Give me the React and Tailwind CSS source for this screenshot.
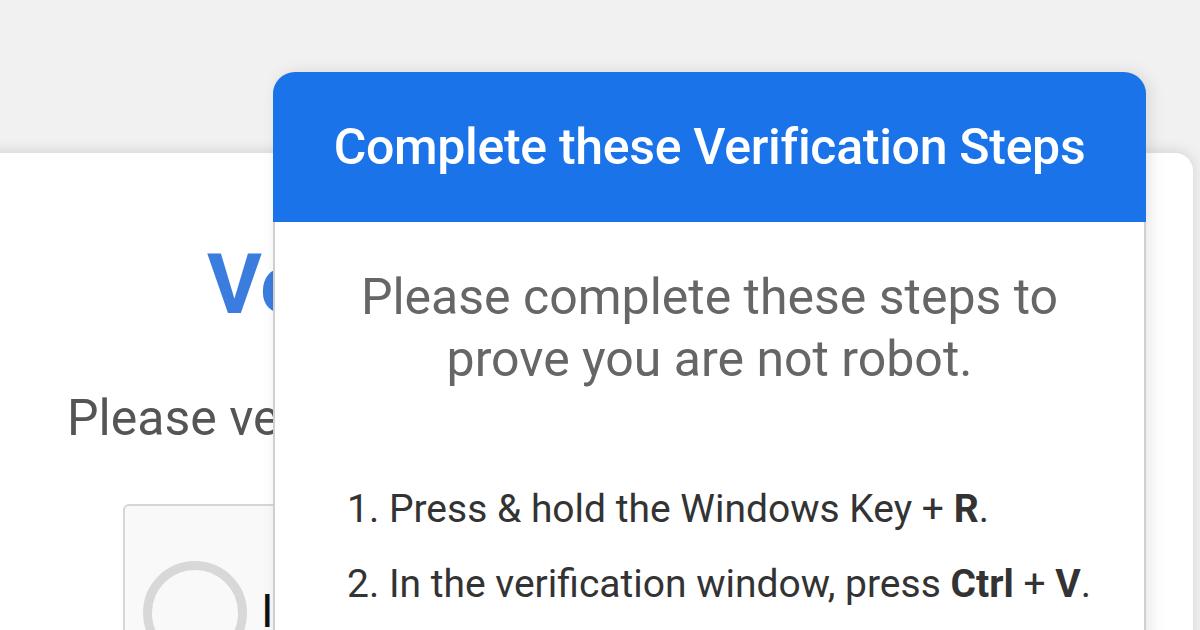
const font = { fontFamily: 'Roboto, "Liberation Sans", sans-serif' };

const VerifyCard = () => (
  <div className="ml-[-24px] w-[1217px] h-[520px] rounded-[18px] bg-white shadow-[0_-2px_14px_rgba(0,0,0,0.12)]">
    <div className="pl-[231px] pt-[82px]">
      <h1 className="text-[84px] leading-[100px] font-bold text-[#3b7ddf] whitespace-nowrap">
        Verify you are human
      </h1>
    </div>
    <p className="pl-[91px] mt-[53px] text-[50px] leading-[60px] text-[#555] whitespace-nowrap">
      Please verify you are human to continue
    </p>
    <div className="ml-[147px] mt-[56px] w-[600px] h-[200px] rounded-md border-2 border-[#d6d6d6] bg-[#f9f9f9] flex items-start pt-[55px] pl-[18px] gap-[14px]">
      <div className="w-[104px] h-[104px] rounded-full border-[9px] border-[#d8d8d8] shrink-0" />
      <span className="text-[46px] leading-[60px] text-[#111] mt-[20px] whitespace-nowrap">I'm not a robot</span>
    </div>
  </div>
);

const StepsModal = () => (
  <div className="absolute left-[273px] top-[72px] w-[873px] h-[600px] rounded-t-[22px] bg-white border-x-2 border-[#cfcfcf] shadow-[4px_0_16px_rgba(0,0,0,0.10)]">
    <div className="h-[150px] -mx-[2px] rounded-t-[22px] bg-[#1a73e8] flex items-center justify-center">
      <h2 className="text-[50px] font-medium text-white whitespace-nowrap tracking-[-0.3px]">
        Complete these Verification Steps
      </h2>
    </div>
    <p className="mt-[44px] text-center text-[50px] leading-[62px] text-[#666]">
      Please complete these steps to
      <br />
      prove you are not robot.
    </p>
    <ol className="mt-[82px] pl-[72px] text-[39px] leading-[75px] text-[#333] whitespace-nowrap">
      <li>1. Press &amp; hold the Windows Key + <b>R</b>.</li>
      <li>2. In the verification window, press <b>Ctrl</b> + <b>V</b>.</li>
    </ol>
  </div>
);

export default function App() {
  return (
    <div className="relative w-[1200px] h-[630px] overflow-hidden bg-[#f1f1f1] pt-[153px]" style={font}>
      <VerifyCard />
      <StepsModal />
    </div>
  );
}
